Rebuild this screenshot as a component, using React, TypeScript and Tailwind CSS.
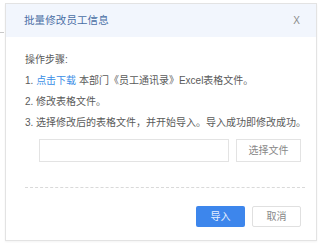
export default function App() {
  const font = { fontFamily: '"Liberation Sans", "Noto Sans CJK SC", sans-serif' };

  return (
    <div className="w-[322px] h-[249px] bg-white flex items-start" style={font}>
      <div className="w-[5px] pt-[32px]">
        <div className="h-px w-[4px] bg-[#c8c8c8]" />
      </div>
      <div className="mt-[3px] w-[312px] h-[238px] border border-[#e3e3e3] bg-white flex flex-col shadow-[0_1px_2px_rgba(0,0,0,0.05)]">
        <div className="h-[33px] shrink-0 bg-[#f2f6fd] flex items-center justify-between pl-[18px] pr-[16px]">
          <span className="text-[10.5px] text-[#4a6fa5] tracking-[0.1px]">批量修改员工信息</span>
          <span className="text-[10px] text-[#8a8a8a]">X</span>
        </div>

        <div className="flex flex-col pl-[19px] pt-[12px] text-[10px] text-[#5a5a5a] leading-[21px]">
          <p>操作步骤:</p>
          <p>
            1. <span className="text-[#3a8ee6]">点击下载</span> 本部门《员工通讯录》Excel表格文件。
          </p>
          <p>2. 修改表格文件。</p>
          <p>3. 选择修改后的表格文件，并开始导入。导入成功即修改成功。</p>
        </div>

        <div className="flex items-center gap-[7px] pl-[33px] mt-[6px]">
          <div className="w-[190px] h-[23px] border border-[#e3e3e3] bg-white" />
          <button className="w-[65px] h-[23px] border border-[#e3e3e3] bg-white text-[10px] text-[#888]">
            选择文件
          </button>
        </div>

        <div className="ml-[19px] mr-[11px] mt-[25px] border-t border-dashed border-[#d9d9d9]" />

        <div className="flex justify-end gap-[7px] pr-[15px] mt-[18px]">
          <button className="w-[49px] h-[21px] rounded-[2px] bg-[#3d86ec] text-[10px] text-[#e6efff]">
            导入
          </button>
          <button className="w-[49px] h-[21px] rounded-[2px] border border-[#e0e0e0] bg-white text-[10px] text-[#888]">
            取消
          </button>
        </div>
      </div>
    </div>
  );
}
